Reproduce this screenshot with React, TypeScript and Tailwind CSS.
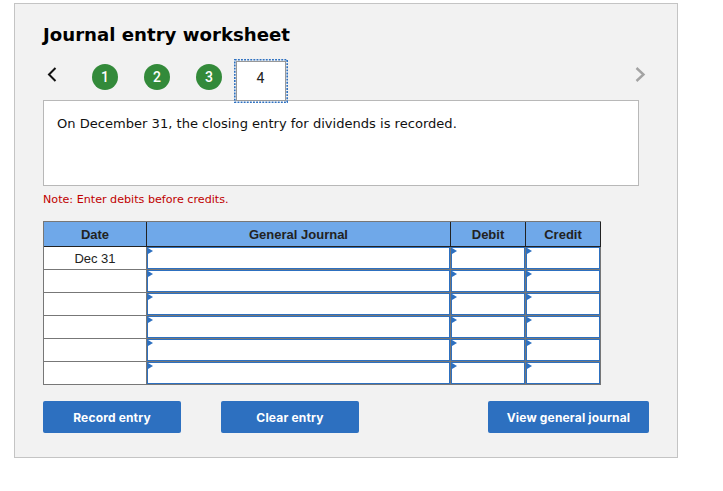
const rows = ["Dec 31", "", "", "", "", ""];

function EntryCell() {
  return (
    <td className="h-[23px] border-b border-r border-[#777] p-0">
      <div className="relative h-full w-full border border-[#2d70c0] bg-white">
        <span className="absolute left-0 top-0 h-0 w-0 border-y-[3px] border-l-[5px] border-y-transparent border-l-[#2d70c0]" />
      </div>
    </td>
  );
}

function ActionButton({ label, className }: { label: string; className: string }) {
  return (
    <button className={`h-[32px] rounded-[2px] bg-[#2d70c0] pt-[1px] text-[12px] font-bold tracking-[0.17px] text-white [font-family:Inter,sans-serif] ${className}`}>
      {label}
    </button>
  );
}

function Step({ n }: { n: number }) {
  return (
    <div className="flex h-[26px] w-[26px] items-center justify-center rounded-full bg-[#338a3a] text-[14px] font-medium text-white [font-family:Roboto,sans-serif]">
      {n}
    </div>
  );
}

export default function App() {
  return (
    <div className="h-[491px] w-[723px] bg-white pl-[14px] pt-[3px] [font-family:'DejaVu_Sans',sans-serif]">
      <div className="h-[455px] w-[664px] border border-[#c4c4c4] bg-[#f2f2f2] pl-[28px] pt-[20px]">
        <h1 className="text-[18.15px] font-bold leading-[22px] text-black">Journal entry worksheet</h1>

        <div className="mt-[13px] flex h-[43px] w-[596px] items-start">
          <svg width="10" height="15" viewBox="0 0 10 15" className="ml-[4px] mt-[8px]">
            <path d="M8.5 1 L2 7.5 L8.5 14" fill="none" stroke="#111" strokeWidth="2" />
          </svg>
          <div className="ml-[35px] mt-[5px] flex gap-[26px]">
            <Step n={1} />
            <Step n={2} />
            <Step n={3} />
          </div>
          <div className="relative z-10 ml-[12px] h-[44px] w-[54px] p-[2px]">
            <svg width="54" height="44" viewBox="0 0 54 44" className="absolute left-0 top-0">
              <rect x="0.8" y="0.8" width="52.4" height="42.4" fill="none" stroke="#2d70c0" strokeWidth="1.6" strokeDasharray="1.9 1.2" />
            </svg>
            <div className="flex h-full w-full justify-center border border-[#999] bg-white pr-[1px] pt-[6px] text-[14px] leading-[20px] text-[#222] [font-family:Roboto,sans-serif]">
              4
            </div>
          </div>
          <svg width="12" height="15" viewBox="0 0 12 15" className="ml-auto mr-[-8px] mt-[8px]">
            <path d="M1.5 1 L8.5 7.5 L1.5 14" fill="none" stroke="#a3a3a3" strokeWidth="2.4" />
          </svg>
        </div>

        <div className="-mt-[2px] h-[86px] w-[596px] border border-[#b8b8b8] bg-white pl-[13px] pt-[14px] text-[13.07px] leading-[18px] text-[#111]">
          On December 31, the closing entry for dividends is recorded.
        </div>

        <p className="mt-[7px] text-[11.15px] leading-[14px] text-[#c00000]">Note: Enter debits before credits.</p>

        <table className="mt-[14px] w-[558px] table-fixed border-separate border-spacing-0 border-l border-t border-[#777] text-[13px] [font-family:'Liberation_Sans',sans-serif]">
          <colgroup>
            <col className="w-[103px]" />
            <col className="w-[304px]" />
            <col className="w-[75px]" />
            <col className="w-[75px]" />
          </colgroup>
          <thead>
            <tr className="bg-[#6fa8e9] text-[#222]">
              {["Date", "General Journal", "Debit", "Credit"].map((h) => (
                <th key={h} className="h-[25px] border-b border-r border-[#222] p-0 pt-[1px] text-center font-bold">
                  {h}
                </th>
              ))}
            </tr>
          </thead>
          <tbody>
            {rows.map((date, i) => (
              <tr key={i}>
                <td className="h-[23px] border-b border-r border-[#777] bg-white p-0 pt-[1px] text-center text-[#222]">
                  {date}
                </td>
                <EntryCell />
                <EntryCell />
                <EntryCell />
              </tr>
            ))}
          </tbody>
        </table>

        <div className="mt-[16px] flex w-[606px]">
          <ActionButton label="Record entry" className="w-[138px]" />
          <ActionButton label="Clear entry" className="ml-[40px] w-[138px]" />
          <ActionButton label="View general journal" className="ml-auto w-[161px]" />
        </div>
      </div>
    </div>
  );
}
